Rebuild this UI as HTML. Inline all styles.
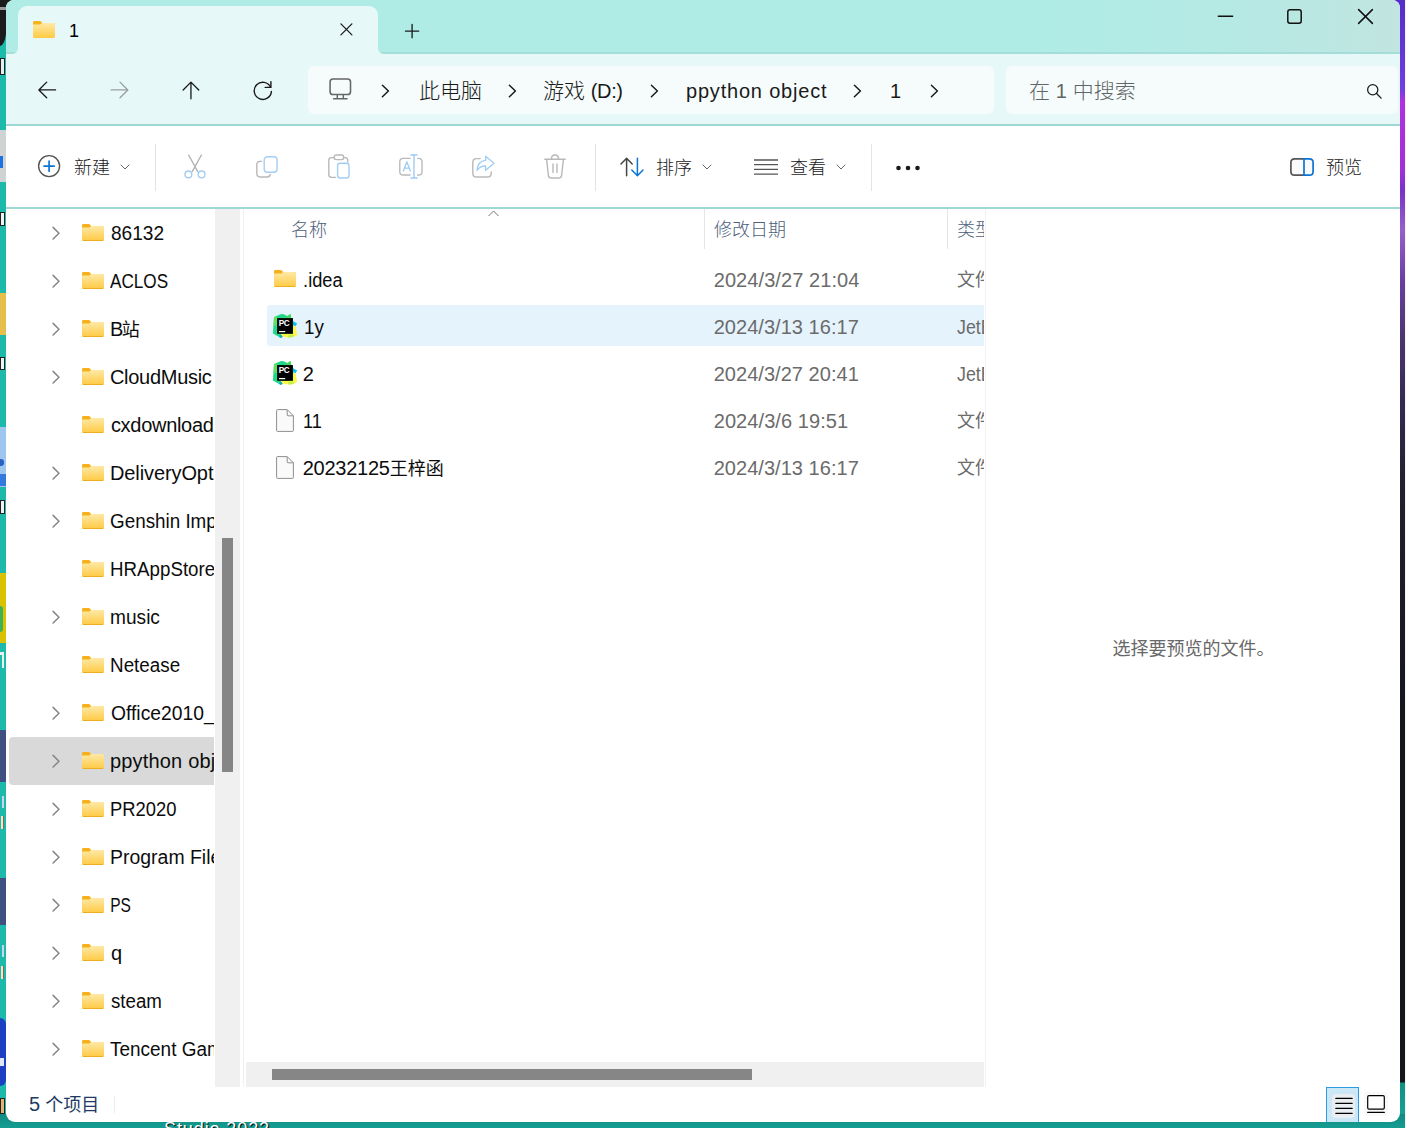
<!DOCTYPE html>
<html lang="zh-CN">
<head>
<meta charset="utf-8">
<title>1 - 文件资源管理器</title>
<style>
*{box-sizing:border-box;margin:0;padding:0}
html,body{width:1406px;height:1128px;overflow:hidden}
body{position:relative;background:#1dbaac;font-family:"Liberation Sans","Noto Sans CJK SC",sans-serif;font-size:18px;color:#1a1a1a;font-weight:300}
.abs{position:absolute}
svg{position:absolute;overflow:visible}
/* desktop behind */
#deskL{left:0;top:0;width:8px;height:1128px;background:#1dbaac}
#deskR{left:1388px;top:0;width:17px;height:1128px;background:linear-gradient(180deg,#552dc8 0,#6f3fe0 90px,#b032e0 102px,#a030d8 170px,#7a32c8 190px,#9660c8 230px,#6a3fa0 280px,#4a3570 340px,#352a55 400px,#24202f 480px,#14161e 700px,#14161e 1082px,#128f84 1083px,#17a89b 1128px)}
#deskRW{z-index:3;left:1405px;top:0;width:1px;height:1128px;background:#f4f4f4}
#deskB{left:0;top:1114px;width:1406px;height:14px;background:linear-gradient(180deg,#0f8a80,#159d92)}
/* window */
#win{z-index:2;left:6px;top:0;width:1394px;height:1122px;background:#fff;border-radius:8px 8px 9px 9px;overflow:hidden}
#titlebar{left:0;top:0;width:1394px;height:54px;background:linear-gradient(90deg,#b0ece6 0,#b0ece6 74%,#b5e9e4 88%,#c1e5e1 100%);border-bottom:2px solid #a5ddd8}
#tab{left:12px;top:6px;width:360px;height:48px;background:#e6f8f7;border-radius:9px 9px 0 0}
#tabL{left:6px;top:48px;width:6px;height:6px;background:radial-gradient(circle at 0 0,rgba(230,248,247,0) 5.5px,#e6f8f7 6.5px)}
#tabR{left:372px;top:48px;width:6px;height:6px;background:radial-gradient(circle at 100% 0,rgba(230,248,247,0) 5.5px,#e6f8f7 6.5px)}
#navbar{left:0;top:54px;width:1394px;height:71px;background:#e6f8f7}
#navline{left:0;top:124px;width:1394px;height:2px;background:#9fd7d4}
#toolbar{left:0;top:126px;width:1394px;height:81px;background:#fff}
#toolline{left:0;top:207px;width:1394px;height:2px;background:#9fd7d4}
.box{background:#f6fcfc;border-radius:6px}
.t21{font-size:21px;line-height:30px;white-space:nowrap}
.la{font-size:20px;font-weight:400}
.t18{font-size:18px;line-height:26px;white-space:nowrap}

.sl,.fn{font-size:20px;line-height:26px;white-space:nowrap;color:#0c0c0c;font-weight:400}
.cj{font-size:18px;font-weight:400}
.hd{font-size:18px;line-height:26px;white-space:nowrap;color:#4c607a;font-weight:300}
.fd{font-size:20px;line-height:26px;white-space:nowrap;color:#6b6b6b;font-weight:400}
.fd.cj{font-size:18px;font-weight:400}
.pv{font-size:18px;line-height:28px;color:#686868;font-weight:400;white-space:nowrap}
.st{font-size:18px;line-height:28px;color:#1e3964;font-weight:400;white-space:nowrap}
.st .la{font-size:20px;font-weight:400}
</style>
</head>
<body>
<div id="deskL" class="abs"></div>
<div id="deskR" class="abs"></div>
<div id="deskRW" class="abs"></div>
<div id="deskB" class="abs"></div>

<div id="win" class="abs">
  <div id="titlebar" class="abs"></div>
  <div id="tab" class="abs"></div>
  <div id="tabL" class="abs"></div>
  <div id="tabR" class="abs"></div>
  <div id="navbar" class="abs"></div>
  <div id="navline" class="abs"></div>
  <div id="toolbar" class="abs"></div>
  <div id="toolline" class="abs"></div>
  <!-- title bar contents (coordinates relative to #win: x-6) -->
  <svg id="tabfolder" style="left:26px;top:20px" width="24" height="19" viewBox="0 0 24 19">
    <defs><linearGradient id="fg" x1="0" y1="0" x2="0" y2="1"><stop offset="0" stop-color="#ffe9a6"/><stop offset="1" stop-color="#ffca43"/></linearGradient></defs>
    <path d="M1 2.2Q1 1 2.2 1H7.6Q8.4 1 9 1.6L10.6 3.2H21.6Q23 3.2 23 4.6V6H1Z" fill="#f7b31c"/>
    <path d="M1 4.6H8.2L10 3H21.8Q23 3 23 4.2V16.6Q23 18 21.6 18H2.4Q1 18 1 16.6Z" fill="url(#fg)"/>
  </svg>
  <div class="abs t18" style="left:63px;top:18px;color:#000">1</div>
  <svg style="left:333.700px;top:23.300px" width="12.800" height="12.800" viewBox="0 0 14 14"><path d="M1 1L13 13M13 1L1 13" stroke="#1a1a1a" stroke-width="1.4" fill="none" stroke-linecap="round"/></svg>
  <svg style="left:399.400px;top:24px" width="14.200" height="14.200" viewBox="0 0 15 15"><path d="M7.5 0.5V14.5M0.5 7.5H14.5" stroke="#1a1a1a" stroke-width="1.4" fill="none" stroke-linecap="round"/></svg>
  <svg style="left:1212px;top:15px" width="15" height="3" viewBox="0 0 15 3"><path d="M0.3 1.3H14.7" stroke="#111" stroke-width="1.4" stroke-linecap="round"/></svg>
  <svg style="left:1281px;top:9px" width="15" height="15" viewBox="0 0 15 15"><rect x="0.8" y="0.8" width="13.4" height="13.4" rx="2.2" fill="none" stroke="#111" stroke-width="1.5"/></svg>
  <svg style="left:1352px;top:9px" width="15" height="15" viewBox="0 0 15 15"><path d="M0.6 0.6L14.4 14.4M14.4 0.6L0.6 14.4" stroke="#111" stroke-width="1.5" fill="none" stroke-linecap="round"/></svg>
  <!-- nav bar (coords relative to #win: x-6) -->
  <svg style="left:31.600px;top:80.600px" width="18.900" height="17.900" viewBox="0 0 20 19"><path d="M18.6 9.5H1.2M9.2 1.2L0.9 9.5L9.2 17.8" stroke="#1a1a1a" stroke-width="1.4" fill="none" stroke-linecap="round" stroke-linejoin="round"/></svg>
  <svg style="left:103.600px;top:80.600px" width="18.900" height="17.900" viewBox="0 0 20 19"><path d="M1.2 9.5H18.6M10.6 1.2L18.9 9.5L10.6 17.8" stroke="#9b9f9f" stroke-width="1.4" fill="none" stroke-linecap="round" stroke-linejoin="round"/></svg>
  <svg style="left:175.500px;top:80.700px" width="17.900" height="18.900" viewBox="0 0 19 20"><path d="M9.5 18.8V1.4M1.2 9.6L9.5 1.2L17.8 9.6" stroke="#1a1a1a" stroke-width="1.4" fill="none" stroke-linecap="round" stroke-linejoin="round"/></svg>
  <svg style="left:246px;top:79px" width="22" height="22" viewBox="0 0 22 22"><path d="M18.6 8.2A8.6 8.6 0 1 0 19.4 12.4" stroke="#1a1a1a" stroke-width="1.4" fill="none" stroke-linecap="round"/><path d="M18.9 2.6V8.4H13.2" stroke="#1a1a1a" stroke-width="1.4" fill="none" stroke-linecap="round" stroke-linejoin="round"/></svg>
  <div class="abs box" style="left:302px;top:66px;width:686px;height:48px"></div>
  <svg style="left:323px;top:78.300px" width="22.600" height="22.400" viewBox="0 0 23 23"><rect x="1" y="1" width="21" height="16" rx="3" fill="none" stroke="#666" stroke-width="1.6"/><path d="M8.4 17.2V21M14.6 17.2V21M4.6 21.4H18.4" stroke="#666" stroke-width="1.5" fill="none" stroke-linecap="round"/></svg>
  <svg class="chev" style="left:375px;top:84px" width="9" height="14" viewBox="0 0 9 14"><path d="M1.4 1.2L7.4 7L1.4 12.8" stroke="#1a1a1a" stroke-width="1.5" fill="none" stroke-linecap="round" stroke-linejoin="round"/></svg>
  <div class="abs t21" style="left:413px;top:76px">此电脑</div>
  <svg class="chev" style="left:502px;top:84px" width="9" height="14" viewBox="0 0 9 14"><path d="M1.4 1.2L7.4 7L1.4 12.8" stroke="#1a1a1a" stroke-width="1.5" fill="none" stroke-linecap="round" stroke-linejoin="round"/></svg>
  <div class="abs t21" style="left:537px;top:76px">游戏 <span class="la" style="letter-spacing:-0.4px">(D:)</span></div>
  <svg class="chev" style="left:644px;top:84px" width="9" height="14" viewBox="0 0 9 14"><path d="M1.4 1.2L7.4 7L1.4 12.8" stroke="#1a1a1a" stroke-width="1.5" fill="none" stroke-linecap="round" stroke-linejoin="round"/></svg>
  <div class="abs t21" style="left:680px;top:76px"><span class="la" style="letter-spacing:0.8px">ppython object</span></div>
  <svg class="chev" style="left:847px;top:84px" width="9" height="14" viewBox="0 0 9 14"><path d="M1.4 1.2L7.4 7L1.4 12.8" stroke="#1a1a1a" stroke-width="1.5" fill="none" stroke-linecap="round" stroke-linejoin="round"/></svg>
  <div class="abs t21" style="left:884px;top:76px"><span class="la">1</span></div>
  <svg class="chev" style="left:924px;top:84px" width="9" height="14" viewBox="0 0 9 14"><path d="M1.4 1.2L7.4 7L1.4 12.8" stroke="#1a1a1a" stroke-width="1.5" fill="none" stroke-linecap="round" stroke-linejoin="round"/></svg>
  <div class="abs box" style="left:1000px;top:66px;width:392px;height:48px"></div>
  <div class="abs t21" style="left:1023px;top:76px;color:#5f6666">在 <span class="la">1</span> 中搜索</div>
  <svg style="left:1360px;top:83.400px" width="16.400" height="16.400" viewBox="0 0 18 18"><circle cx="7.4" cy="7.4" r="5.6" fill="none" stroke="#1a1a1a" stroke-width="1.4"/><path d="M11.6 11.6L16.6 16.6" stroke="#1a1a1a" stroke-width="1.5" stroke-linecap="round"/></svg>
  <!-- toolbar -->
  <svg style="left:31px;top:154px" width="24" height="24" viewBox="0 0 24 24"><circle cx="12.1" cy="12.1" r="10.5" fill="none" stroke="#555" stroke-width="1.4"/><path d="M12.1 7V17.2M7 12.1H17.2" stroke="#0a74d6" stroke-width="1.7" stroke-linecap="round"/></svg>
  <div class="abs t18" style="left:68px;top:155px">新建</div>
  <svg style="left:114px;top:164px" width="10" height="6" viewBox="0 0 10 6"><path d="M1 1L5 5L9 1" stroke="#666" stroke-width="1" fill="none" stroke-linecap="round" stroke-linejoin="round"/></svg>
  <div class="abs sep" style="left:149px;top:144px;width:1px;height:47px;background:#e4e4e4"></div>
  <svg style="left:178px;top:154px" width="22" height="25" viewBox="0 0 22 25"><path d="M4.6 1L13.6 17.4M17.4 1L8.4 17.4" stroke="#b4b4b4" stroke-width="1.4" fill="none" stroke-linecap="round"/><circle cx="4.4" cy="20.4" r="3.4" fill="none" stroke="#a3cdf3" stroke-width="1.4"/><circle cx="17.6" cy="20.4" r="3.4" fill="none" stroke="#a3cdf3" stroke-width="1.4"/></svg>
  <svg style="left:250px;top:156px" width="22" height="22" viewBox="0 0 22 22"><path d="M5.6 5.4H4.2Q0.8 5.4 0.8 8.8V17.6Q0.8 21 4.2 21H10.8Q14 21 14.2 18.4" stroke="#b9b9b9" stroke-width="1.4" fill="none" stroke-linecap="round"/><rect x="8.2" y="0.8" width="12.8" height="15.4" rx="3.2" fill="none" stroke="#a3cdf3" stroke-width="1.4"/></svg>
  <svg style="left:322px;top:154px" width="22" height="25" viewBox="0 0 22 25"><path d="M6 3.6H3.6Q0.8 3.6 0.8 6.4V20.6Q0.8 23.4 3.6 23.4H7.6M16 3.6H17.2Q19.6 3.6 19.8 6.2V8" stroke="#b9b9b9" stroke-width="1.4" fill="none" stroke-linecap="round"/><rect x="6.2" y="1" width="9.4" height="4.6" rx="1.8" fill="none" stroke="#b9b9b9" stroke-width="1.4"/><rect x="9.6" y="9.2" width="11.4" height="14.8" rx="2.4" fill="none" stroke="#a3cdf3" stroke-width="1.4"/></svg>
  <svg style="left:393px;top:154px" width="24" height="25" viewBox="0 0 25 25" preserveAspectRatio="none"><path d="M11.6 4.4H4.4Q0.8 4.4 0.8 8V17.4Q0.8 21 4.4 21H11.6M19.4 4.4H20.4Q24 4.4 24 8V17.4Q24 21 20.4 21H19.4" stroke="#b9b9b9" stroke-width="1.4" fill="none" stroke-linecap="round"/><path d="M15.6 1.4V23.6M12.4 1H18.8M12.4 24H18.8" stroke="#9ccaf3" stroke-width="1.4" fill="none" stroke-linecap="round"/><path d="M4.6 17L8.2 7.8L11.8 17M5.8 14.2H10.6" stroke="#9ccaf3" stroke-width="1.3" fill="none" stroke-linecap="round" stroke-linejoin="round"/></svg>
  <svg style="left:466px;top:155px" width="23" height="23" viewBox="0 0 23 23"><path d="M8.2 3.6H4.6Q0.8 3.6 0.8 7.4V18.2Q0.8 22 4.6 22H15.4Q19.2 22 19.2 18.2V17" stroke="#b9b9b9" stroke-width="1.4" fill="none" stroke-linecap="round"/><path d="M13.6 1.2L22 8.2L13.6 15.2V11Q8 10.8 5 15.4Q5.600 6.2 13.6 5.400Z" stroke="#a3cdf3" stroke-width="1.4" fill="none" stroke-linejoin="round"/></svg>
  <svg style="left:538px;top:154px" width="22" height="25" viewBox="0 0 22 25"><path d="M0.8 5.2H21.2M7.400 4.800Q7.600 1 11 1Q14.400 1 14.600 4.800" stroke="#b9b9b9" stroke-width="1.400" fill="none" stroke-linecap="round"/><path d="M2.600 5.400L4.400 21.400Q4.700 24 7.200 24H14.800Q17.300 24 17.600 21.400L19.400 5.400" stroke="#b9b9b9" stroke-width="1.400" fill="none" stroke-linecap="round"/><path d="M9 10V18.600M13 10V18.600" stroke="#b9b9b9" stroke-width="1.400" stroke-linecap="round"/></svg>
  <div class="abs sep" style="left:589px;top:144px;width:1px;height:47px;background:#e4e4e4"></div>
  <svg style="left:614px;top:157px" width="24" height="20" viewBox="0 0 24 20"><path d="M6.600 18.800V1.400M1 7L6.600 1.200L12.200 7" stroke="#444" stroke-width="1.500" fill="none" stroke-linecap="round" stroke-linejoin="round"/><path d="M17.400 1.200V18.600M11.800 13L17.400 18.800L23 13" stroke="#0a74d6" stroke-width="1.500" fill="none" stroke-linecap="round" stroke-linejoin="round"/></svg>
  <div class="abs t18" style="left:650px;top:155px">排序</div>
  <svg style="left:696px;top:164px" width="10" height="6" viewBox="0 0 10 6"><path d="M1 1L5 5L9 1" stroke="#666" stroke-width="1" fill="none" stroke-linecap="round" stroke-linejoin="round"/></svg>
  <svg style="left:748px;top:159px" width="24" height="17" viewBox="0 0 24 17"><path d="M0 1H24M0 5.700H24M0 10.400H24M0 15.200H24" stroke="#555" stroke-width="1.300" fill="none"/></svg>
  <div class="abs t18" style="left:784px;top:155px">查看</div>
  <svg style="left:830px;top:164px" width="10" height="6" viewBox="0 0 10 6"><path d="M1 1L5 5L9 1" stroke="#666" stroke-width="1" fill="none" stroke-linecap="round" stroke-linejoin="round"/></svg>
  <div class="abs sep" style="left:865px;top:144px;width:1px;height:47px;background:#e4e4e4"></div>
  <svg style="left:889px;top:165px" width="26" height="6" viewBox="0 0 26 6"><circle cx="3.500" cy="3" r="2.300" fill="#1a1a1a"/><circle cx="13" cy="3" r="2.300" fill="#1a1a1a"/><circle cx="22.500" cy="3" r="2.300" fill="#1a1a1a"/></svg>
  <svg style="left:1284px;top:158px" width="24" height="18" viewBox="0 0 24 18"><path d="M14 0.900H4.600Q0.900 0.900 0.900 4.600V13.400Q0.900 17.100 4.600 17.100H14" stroke="#555" stroke-width="1.700" fill="#fafafa"/><path d="M14 0.900H19.400Q23.100 0.900 23.100 4.600V13.400Q23.100 17.100 19.400 17.100H14Z" stroke="#0a74d6" stroke-width="1.700" fill="#fafafa"/></svg>
  <div class="abs t18" style="left:1320px;top:155px">预览</div>
  <!-- sidebar -->
  <div id="side" class="abs" style="left:0;top:209px;width:208px;height:878px;overflow:hidden">
    <svg style="left:46px;top:17px" width="9" height="14" viewBox="0 0 9 14"><path d="M1.100 1.400L7 7.200L1.100 13" stroke="#868686" stroke-width="1.500" fill="none" stroke-linecap="round" stroke-linejoin="round"/></svg>
    <svg style="left:76px;top:15px" width="22" height="17" viewBox="0 0 22 17"><path d="M0 1.4Q0 0 1.4 0H6.400Q7.200 0 7.800 0.600L9.200 2H20.600Q22 2 22 3.400V5H0Z" fill="#f5b01a"/><path d="M0 3.400H7.400L9 2H20.600Q22 2 22 3.400V15.600Q22 17 20.600 17H1.400Q0 17 0 15.600Z" fill="url(#fg)"/><path d="M0.300 16.300Q0.700 17 1.400 17H20.600Q21.300 17 21.700 16.300Z" fill="#eaa416"/></svg>
    <div class="abs sl" style="left:104.9px;top:11px;transform:scaleX(0.955);transform-origin:0.0px 50%">86132</div>
    <svg style="left:46px;top:65px" width="9" height="14" viewBox="0 0 9 14"><path d="M1.100 1.400L7 7.200L1.100 13" stroke="#868686" stroke-width="1.500" fill="none" stroke-linecap="round" stroke-linejoin="round"/></svg>
    <svg style="left:76px;top:63px" width="22" height="17" viewBox="0 0 22 17"><path d="M0 1.4Q0 0 1.4 0H6.400Q7.200 0 7.800 0.600L9.200 2H20.600Q22 2 22 3.400V5H0Z" fill="#f5b01a"/><path d="M0 3.400H7.400L9 2H20.600Q22 2 22 3.400V15.600Q22 17 20.600 17H1.400Q0 17 0 15.600Z" fill="url(#fg)"/><path d="M0.300 16.300Q0.700 17 1.400 17H20.600Q21.300 17 21.700 16.300Z" fill="#eaa416"/></svg>
    <div class="abs sl" style="left:104.4px;top:59px;transform:scaleX(0.857);transform-origin:0.0px 50%">ACLOS</div>
    <svg style="left:46px;top:113px" width="9" height="14" viewBox="0 0 9 14"><path d="M1.100 1.400L7 7.200L1.100 13" stroke="#868686" stroke-width="1.500" fill="none" stroke-linecap="round" stroke-linejoin="round"/></svg>
    <svg style="left:76px;top:111px" width="22" height="17" viewBox="0 0 22 17"><path d="M0 1.4Q0 0 1.4 0H6.400Q7.200 0 7.800 0.600L9.200 2H20.600Q22 2 22 3.400V5H0Z" fill="#f5b01a"/><path d="M0 3.400H7.400L9 2H20.600Q22 2 22 3.400V15.600Q22 17 20.600 17H1.400Q0 17 0 15.600Z" fill="url(#fg)"/><path d="M0.300 16.300Q0.700 17 1.400 17H20.600Q21.300 17 21.700 16.300Z" fill="#eaa416"/></svg>
    <div class="abs sl" style="left:103.9px;top:107px;letter-spacing:-1.6px">B<span class="cj" style="letter-spacing:0">站</span></div>
    <svg style="left:46px;top:161px" width="9" height="14" viewBox="0 0 9 14"><path d="M1.100 1.400L7 7.200L1.100 13" stroke="#868686" stroke-width="1.500" fill="none" stroke-linecap="round" stroke-linejoin="round"/></svg>
    <svg style="left:76px;top:159px" width="22" height="17" viewBox="0 0 22 17"><path d="M0 1.4Q0 0 1.4 0H6.400Q7.200 0 7.800 0.600L9.200 2H20.600Q22 2 22 3.400V5H0Z" fill="#f5b01a"/><path d="M0 3.400H7.400L9 2H20.600Q22 2 22 3.400V15.600Q22 17 20.600 17H1.400Q0 17 0 15.600Z" fill="url(#fg)"/><path d="M0.300 16.300Q0.700 17 1.400 17H20.600Q21.300 17 21.700 16.300Z" fill="#eaa416"/></svg>
    <div class="abs sl" style="left:103.9px;top:155px;letter-spacing:-0.28px">CloudMusic</div>
    <svg style="left:76px;top:207px" width="22" height="17" viewBox="0 0 22 17"><path d="M0 1.4Q0 0 1.4 0H6.400Q7.200 0 7.800 0.600L9.200 2H20.600Q22 2 22 3.400V5H0Z" fill="#f5b01a"/><path d="M0 3.400H7.400L9 2H20.600Q22 2 22 3.400V15.600Q22 17 20.600 17H1.400Q0 17 0 15.600Z" fill="url(#fg)"/><path d="M0.300 16.300Q0.700 17 1.400 17H20.600Q21.300 17 21.700 16.300Z" fill="#eaa416"/></svg>
    <div class="abs sl" style="left:104.9px;top:203px;letter-spacing:-0.29px">cxdownload</div>
    <svg style="left:46px;top:257px" width="9" height="14" viewBox="0 0 9 14"><path d="M1.100 1.400L7 7.200L1.100 13" stroke="#868686" stroke-width="1.500" fill="none" stroke-linecap="round" stroke-linejoin="round"/></svg>
    <svg style="left:76px;top:255px" width="22" height="17" viewBox="0 0 22 17"><path d="M0 1.4Q0 0 1.4 0H6.400Q7.200 0 7.800 0.600L9.200 2H20.600Q22 2 22 3.400V5H0Z" fill="#f5b01a"/><path d="M0 3.400H7.400L9 2H20.600Q22 2 22 3.400V15.600Q22 17 20.600 17H1.400Q0 17 0 15.600Z" fill="url(#fg)"/><path d="M0.300 16.300Q0.700 17 1.400 17H20.600Q21.300 17 21.700 16.300Z" fill="#eaa416"/></svg>
    <div class="abs sl" style="left:103.9px;top:251px;letter-spacing:-0.09px">DeliveryOptimization</div>
    <svg style="left:46px;top:305px" width="9" height="14" viewBox="0 0 9 14"><path d="M1.100 1.400L7 7.200L1.100 13" stroke="#868686" stroke-width="1.500" fill="none" stroke-linecap="round" stroke-linejoin="round"/></svg>
    <svg style="left:76px;top:303px" width="22" height="17" viewBox="0 0 22 17"><path d="M0 1.4Q0 0 1.4 0H6.400Q7.200 0 7.800 0.600L9.200 2H20.600Q22 2 22 3.400V5H0Z" fill="#f5b01a"/><path d="M0 3.400H7.400L9 2H20.600Q22 2 22 3.400V15.600Q22 17 20.600 17H1.400Q0 17 0 15.600Z" fill="url(#fg)"/><path d="M0.300 16.300Q0.700 17 1.400 17H20.600Q21.300 17 21.700 16.300Z" fill="#eaa416"/></svg>
    <div class="abs sl" style="left:103.9px;top:299px;transform:scaleX(0.941);transform-origin:1.0px 50%">Genshin Impact Game</div>
    <svg style="left:76px;top:351px" width="22" height="17" viewBox="0 0 22 17"><path d="M0 1.4Q0 0 1.4 0H6.400Q7.200 0 7.800 0.600L9.200 2H20.600Q22 2 22 3.400V5H0Z" fill="#f5b01a"/><path d="M0 3.400H7.400L9 2H20.600Q22 2 22 3.400V15.600Q22 17 20.600 17H1.400Q0 17 0 15.600Z" fill="url(#fg)"/><path d="M0.300 16.300Q0.700 17 1.400 17H20.600Q21.300 17 21.700 16.300Z" fill="#eaa416"/></svg>
    <div class="abs sl" style="left:103.9px;top:347px;transform:scaleX(0.936);transform-origin:1.0px 50%">HRAppStore</div>
    <svg style="left:46px;top:401px" width="9" height="14" viewBox="0 0 9 14"><path d="M1.100 1.400L7 7.200L1.100 13" stroke="#868686" stroke-width="1.500" fill="none" stroke-linecap="round" stroke-linejoin="round"/></svg>
    <svg style="left:76px;top:399px" width="22" height="17" viewBox="0 0 22 17"><path d="M0 1.4Q0 0 1.4 0H6.400Q7.200 0 7.800 0.600L9.200 2H20.600Q22 2 22 3.400V5H0Z" fill="#f5b01a"/><path d="M0 3.400H7.400L9 2H20.600Q22 2 22 3.400V15.600Q22 17 20.600 17H1.400Q0 17 0 15.600Z" fill="url(#fg)"/><path d="M0.300 16.300Q0.700 17 1.400 17H20.600Q21.300 17 21.700 16.300Z" fill="#eaa416"/></svg>
    <div class="abs sl" style="left:103.9px;top:395px;transform:scaleX(0.955);transform-origin:1.0px 50%">music</div>
    <svg style="left:76px;top:447px" width="22" height="17" viewBox="0 0 22 17"><path d="M0 1.4Q0 0 1.4 0H6.400Q7.200 0 7.800 0.600L9.200 2H20.600Q22 2 22 3.400V5H0Z" fill="#f5b01a"/><path d="M0 3.400H7.400L9 2H20.600Q22 2 22 3.400V15.600Q22 17 20.600 17H1.400Q0 17 0 15.600Z" fill="url(#fg)"/><path d="M0.300 16.300Q0.700 17 1.400 17H20.600Q21.300 17 21.700 16.300Z" fill="#eaa416"/></svg>
    <div class="abs sl" style="left:103.9px;top:443px;transform:scaleX(0.940);transform-origin:1.0px 50%">Netease</div>
    <svg style="left:46px;top:497px" width="9" height="14" viewBox="0 0 9 14"><path d="M1.100 1.400L7 7.200L1.100 13" stroke="#868686" stroke-width="1.500" fill="none" stroke-linecap="round" stroke-linejoin="round"/></svg>
    <svg style="left:76px;top:495px" width="22" height="17" viewBox="0 0 22 17"><path d="M0 1.4Q0 0 1.4 0H6.400Q7.200 0 7.800 0.600L9.200 2H20.600Q22 2 22 3.400V5H0Z" fill="#f5b01a"/><path d="M0 3.400H7.400L9 2H20.600Q22 2 22 3.400V15.600Q22 17 20.600 17H1.400Q0 17 0 15.600Z" fill="url(#fg)"/><path d="M0.300 16.300Q0.700 17 1.400 17H20.600Q21.300 17 21.700 16.300Z" fill="#eaa416"/></svg>
    <div class="abs sl" style="left:104.9px;top:491px;transform:scaleX(0.964);transform-origin:0.0px 50%">Office2010_SP1</div>
    <div class="abs" style="left:3px;top:528px;width:210px;height:48px;background:#d9d9d9;border-radius:4px 0 0 4px"></div>
    <svg style="left:46px;top:545px" width="9" height="14" viewBox="0 0 9 14"><path d="M1.100 1.400L7 7.200L1.100 13" stroke="#868686" stroke-width="1.500" fill="none" stroke-linecap="round" stroke-linejoin="round"/></svg>
    <svg style="left:76px;top:543px" width="22" height="17" viewBox="0 0 22 17"><path d="M0 1.4Q0 0 1.4 0H6.400Q7.200 0 7.800 0.600L9.200 2H20.600Q22 2 22 3.400V5H0Z" fill="#f5b01a"/><path d="M0 3.400H7.400L9 2H20.600Q22 2 22 3.400V15.600Q22 17 20.600 17H1.400Q0 17 0 15.600Z" fill="url(#fg)"/><path d="M0.300 16.300Q0.700 17 1.400 17H20.600Q21.300 17 21.700 16.300Z" fill="#eaa416"/></svg>
    <div class="abs sl" style="left:103.9px;top:539px;letter-spacing:0.19px">ppython object</div>
    <svg style="left:46px;top:593px" width="9" height="14" viewBox="0 0 9 14"><path d="M1.100 1.400L7 7.200L1.100 13" stroke="#868686" stroke-width="1.500" fill="none" stroke-linecap="round" stroke-linejoin="round"/></svg>
    <svg style="left:76px;top:591px" width="22" height="17" viewBox="0 0 22 17"><path d="M0 1.4Q0 0 1.4 0H6.400Q7.200 0 7.800 0.600L9.200 2H20.600Q22 2 22 3.400V5H0Z" fill="#f5b01a"/><path d="M0 3.400H7.400L9 2H20.600Q22 2 22 3.400V15.600Q22 17 20.600 17H1.400Q0 17 0 15.600Z" fill="url(#fg)"/><path d="M0.300 16.300Q0.700 17 1.400 17H20.600Q21.300 17 21.700 16.300Z" fill="#eaa416"/></svg>
    <div class="abs sl" style="left:103.9px;top:587px;transform:scaleX(0.919);transform-origin:1.0px 50%">PR2020</div>
    <svg style="left:46px;top:641px" width="9" height="14" viewBox="0 0 9 14"><path d="M1.100 1.400L7 7.200L1.100 13" stroke="#868686" stroke-width="1.500" fill="none" stroke-linecap="round" stroke-linejoin="round"/></svg>
    <svg style="left:76px;top:639px" width="22" height="17" viewBox="0 0 22 17"><path d="M0 1.4Q0 0 1.4 0H6.400Q7.200 0 7.800 0.600L9.200 2H20.600Q22 2 22 3.400V5H0Z" fill="#f5b01a"/><path d="M0 3.400H7.400L9 2H20.600Q22 2 22 3.400V15.600Q22 17 20.600 17H1.400Q0 17 0 15.600Z" fill="url(#fg)"/><path d="M0.300 16.300Q0.700 17 1.400 17H20.600Q21.300 17 21.700 16.300Z" fill="#eaa416"/></svg>
    <div class="abs sl" style="left:103.9px;top:635px;transform:scaleX(0.972);transform-origin:1.0px 50%">Program Files</div>
    <svg style="left:46px;top:689px" width="9" height="14" viewBox="0 0 9 14"><path d="M1.100 1.400L7 7.200L1.100 13" stroke="#868686" stroke-width="1.500" fill="none" stroke-linecap="round" stroke-linejoin="round"/></svg>
    <svg style="left:76px;top:687px" width="22" height="17" viewBox="0 0 22 17"><path d="M0 1.4Q0 0 1.4 0H6.400Q7.200 0 7.800 0.600L9.200 2H20.600Q22 2 22 3.400V5H0Z" fill="#f5b01a"/><path d="M0 3.400H7.400L9 2H20.600Q22 2 22 3.400V15.600Q22 17 20.600 17H1.400Q0 17 0 15.600Z" fill="url(#fg)"/><path d="M0.300 16.300Q0.700 17 1.400 17H20.600Q21.300 17 21.700 16.300Z" fill="#eaa416"/></svg>
    <div class="abs sl" style="left:103.9px;top:683px;transform:scaleX(0.773);transform-origin:1.0px 50%">PS</div>
    <svg style="left:46px;top:737px" width="9" height="14" viewBox="0 0 9 14"><path d="M1.100 1.400L7 7.200L1.100 13" stroke="#868686" stroke-width="1.500" fill="none" stroke-linecap="round" stroke-linejoin="round"/></svg>
    <svg style="left:76px;top:735px" width="22" height="17" viewBox="0 0 22 17"><path d="M0 1.4Q0 0 1.4 0H6.400Q7.200 0 7.800 0.600L9.200 2H20.600Q22 2 22 3.400V5H0Z" fill="#f5b01a"/><path d="M0 3.400H7.400L9 2H20.600Q22 2 22 3.400V15.600Q22 17 20.600 17H1.400Q0 17 0 15.600Z" fill="url(#fg)"/><path d="M0.300 16.300Q0.700 17 1.400 17H20.600Q21.300 17 21.700 16.300Z" fill="#eaa416"/></svg>
    <div class="abs sl" style="left:104.9px;top:731px">q</div>
    <svg style="left:46px;top:785px" width="9" height="14" viewBox="0 0 9 14"><path d="M1.100 1.400L7 7.200L1.100 13" stroke="#868686" stroke-width="1.500" fill="none" stroke-linecap="round" stroke-linejoin="round"/></svg>
    <svg style="left:76px;top:783px" width="22" height="17" viewBox="0 0 22 17"><path d="M0 1.4Q0 0 1.4 0H6.400Q7.200 0 7.800 0.600L9.200 2H20.600Q22 2 22 3.400V5H0Z" fill="#f5b01a"/><path d="M0 3.400H7.400L9 2H20.600Q22 2 22 3.400V15.600Q22 17 20.600 17H1.400Q0 17 0 15.600Z" fill="url(#fg)"/><path d="M0.300 16.300Q0.700 17 1.400 17H20.600Q21.300 17 21.700 16.300Z" fill="#eaa416"/></svg>
    <div class="abs sl" style="left:104.9px;top:779px;transform:scaleX(0.935);transform-origin:0.0px 50%">steam</div>
    <svg style="left:46px;top:833px" width="9" height="14" viewBox="0 0 9 14"><path d="M1.100 1.400L7 7.200L1.100 13" stroke="#868686" stroke-width="1.500" fill="none" stroke-linecap="round" stroke-linejoin="round"/></svg>
    <svg style="left:76px;top:831px" width="22" height="17" viewBox="0 0 22 17"><path d="M0 1.4Q0 0 1.4 0H6.400Q7.200 0 7.800 0.600L9.200 2H20.600Q22 2 22 3.400V5H0Z" fill="#f5b01a"/><path d="M0 3.400H7.400L9 2H20.600Q22 2 22 3.400V15.600Q22 17 20.600 17H1.400Q0 17 0 15.600Z" fill="url(#fg)"/><path d="M0.300 16.300Q0.700 17 1.400 17H20.600Q21.300 17 21.700 16.300Z" fill="#eaa416"/></svg>
    <div class="abs sl" style="left:104.4px;top:827px;transform:scaleX(0.948);transform-origin:0.0px 50%">Tencent Games</div>
  </div>
  <div class="abs" style="left:209px;top:209px;width:25px;height:878px;background:#f0f0f0"></div>
  <div class="abs" style="left:216px;top:538px;width:11px;height:234px;background:#868686"></div>
  <div class="abs" style="left:237px;top:209px;width:1px;height:878px;background:#f0f0f0"></div>
  <!-- file list -->
  <div id="files" class="abs" style="left:239px;top:209px;width:739px;height:853px;overflow:hidden">
    <div class="abs hd" style="left:46px;top:8px">名称</div>
    <svg style="left:243px;top:1px" width="11" height="7" viewBox="0 0 11 7"><path d="M0.500 6L5.500 1L10.500 6" stroke="#767676" stroke-width="1" fill="none"/></svg>
    <div class="abs" style="left:459px;top:0;width:1px;height:40px;background:#e5e5e5"></div>
    <div class="abs hd" style="left:469px;top:8px">修改日期</div>
    <div class="abs" style="left:702px;top:0;width:1px;height:40px;background:#e5e5e5"></div>
    <div class="abs hd" style="left:712px;top:8px">类型</div>
    <svg style="left:29px;top:61px" width="22" height="17" viewBox="0 0 22 17"><path d="M0 1.4Q0 0 1.4 0H6.400Q7.200 0 7.800 0.600L9.200 2H20.600Q22 2 22 3.400V5H0Z" fill="#f5b01a"/><path d="M0 3.400H7.400L9 2H20.600Q22 2 22 3.400V15.600Q22 17 20.600 17H1.400Q0 17 0 15.600Z" fill="url(#fg)"/><path d="M0.300 16.300Q0.700 17 1.400 17H20.600Q21.300 17 21.700 16.300Z" fill="#eaa416"/></svg>
    <div class="abs fn" style="left:57.7px;top:57.5px;transform:scaleX(0.913);transform-origin:1.0px 50%">.idea</div>
    <div class="abs fd" style="left:468.7px;top:57.5px;letter-spacing:0.08px">2024/3/27 21:04</div>
    <div class="abs fd cj" style="left:712.0px;top:57.5px">文件夹</div>
    <div class="abs" style="left:22px;top:96px;width:760px;height:41px;background:#e5f3fd;border-radius:3px 0 0 3px"></div>
    <svg style="left:27px;top:104px" width="26" height="26" viewBox="0 0 26 26"><polygon points="2,4 9.200,1.100 11.700,1.300 15.300,2.900 18.600,1 19.200,5.100 21,5.100 21,21 8.200,21 10.700,23.500 8.900,24.900 0.900,20.500" fill="#21d789"/><polygon points="2,4.200 5.200,3.600 5.200,13 1.500,12.500" fill="#7ddf55" opacity=".75"/><polygon points="15.300,2.900 18.600,1 19.200,5.100 12,5.100" fill="#4fd94f" opacity=".8"/><polygon points="20.900,7.900 25.200,10.400 23.400,13.200 20.900,12.600" fill="#07c3f2"/><polygon points="8.200,21 20.900,20.700 20.900,12.600 23.400,13 25.200,21.400 24.100,23.100 18.800,24.600 13.900,24.200 10.700,23.500" fill="#fcf84a"/><polygon points="16.500,22 21,21.500 22,23.600 18.800,24.600 16,24.400" fill="#a9ea4a" opacity=".7"/><polygon points="8.200,21 10.700,23.500 8.900,24.900 7.300,24" fill="#14a6c8"/><rect x="5.100" y="5.100" width="15.800" height="15.700" fill="#000"/><text x="6.700" y="13.100" font-family="Liberation Sans,sans-serif" font-weight="700" font-size="8.200" fill="#fff" letter-spacing="-0.300">PC</text><rect x="7" y="18" width="6.200" height="1.200" fill="#fff"/></svg>
    <div class="abs fn" style="left:58.7px;top:104.5px;transform:scaleX(0.939);transform-origin:1.0px 50%">1y</div>
    <div class="abs fd" style="left:468.7px;top:104.5px;letter-spacing:0.04px">2024/3/13 16:17</div>
    <div class="abs fd" style="left:711.5px;top:104.5px;transform:scaleX(0.89);transform-origin:0 50%">JetBrains PyCharm</div>
    <svg style="left:27px;top:151px" width="26" height="26" viewBox="0 0 26 26"><polygon points="2,4 9.200,1.100 11.700,1.300 15.300,2.900 18.600,1 19.200,5.100 21,5.100 21,21 8.200,21 10.700,23.500 8.900,24.900 0.900,20.500" fill="#21d789"/><polygon points="2,4.200 5.200,3.600 5.200,13 1.500,12.500" fill="#7ddf55" opacity=".75"/><polygon points="15.300,2.900 18.600,1 19.200,5.100 12,5.100" fill="#4fd94f" opacity=".8"/><polygon points="20.900,7.900 25.200,10.400 23.400,13.200 20.900,12.600" fill="#07c3f2"/><polygon points="8.200,21 20.900,20.700 20.900,12.600 23.400,13 25.200,21.400 24.100,23.100 18.800,24.600 13.900,24.200 10.700,23.500" fill="#fcf84a"/><polygon points="16.500,22 21,21.500 22,23.600 18.800,24.600 16,24.400" fill="#a9ea4a" opacity=".7"/><polygon points="8.200,21 10.700,23.500 8.900,24.900 7.300,24" fill="#14a6c8"/><rect x="5.100" y="5.100" width="15.800" height="15.700" fill="#000"/><text x="6.700" y="13.100" font-family="Liberation Sans,sans-serif" font-weight="700" font-size="8.200" fill="#fff" letter-spacing="-0.300">PC</text><rect x="7" y="18" width="6.200" height="1.200" fill="#fff"/></svg>
    <div class="abs fn" style="left:57.7px;top:151.5px;">2</div>
    <div class="abs fd" style="left:468.7px;top:151.5px;letter-spacing:0.04px">2024/3/27 20:41</div>
    <div class="abs fd" style="left:711.5px;top:151.5px;transform:scaleX(0.89);transform-origin:0 50%">JetBrains PyCharm</div>
    <svg style="left:30.5px;top:200px" width="18" height="23" viewBox="0 0 18 23"><path d="M1.400 0.600H11.200L17.400 6.800V21.600Q17.400 22.400 16.600 22.400H1.400Q0.600 22.400 0.600 21.600V1.400Q0.600 0.600 1.400 0.600Z" fill="#fafafa" stroke="#8e8e8e" stroke-width="1"/><path d="M11.200 0.800V6Q11.200 6.800 12 6.800H17.200" fill="none" stroke="#8e8e8e" stroke-width="1"/></svg>
    <div class="abs fn" style="left:58.1px;top:198.5px;transform:scaleX(0.911);transform-origin:1.0px 50%">11</div>
    <div class="abs fd" style="left:468.7px;top:198.5px;letter-spacing:0.08px">2024/3/6 19:51</div>
    <div class="abs fd cj" style="left:712.0px;top:198.5px">文件</div>
    <svg style="left:30.5px;top:247px" width="18" height="23" viewBox="0 0 18 23"><path d="M1.400 0.600H11.200L17.400 6.800V21.600Q17.400 22.400 16.600 22.400H1.400Q0.600 22.400 0.600 21.600V1.400Q0.600 0.600 1.400 0.600Z" fill="#fafafa" stroke="#8e8e8e" stroke-width="1"/><path d="M11.200 0.800V6Q11.200 6.800 12 6.800H17.200" fill="none" stroke="#8e8e8e" stroke-width="1"/></svg>
    <div class="abs fn" style="left:57.7px;top:245.5px;letter-spacing:-0.25px">20232125<span class="cj" style="letter-spacing:0">王梓函</span></div>
    <div class="abs fd" style="left:468.7px;top:245.5px;letter-spacing:0.04px">2024/3/13 16:17</div>
    <div class="abs fd cj" style="left:712.0px;top:245.5px">文件</div>
  </div>
  <div class="abs" style="left:240px;top:1062px;width:738px;height:25px;background:#f0f0f0"></div>
  <div class="abs" style="left:266px;top:1069px;width:480px;height:11px;background:#868686"></div>
  <div class="abs" style="left:979px;top:209px;width:1px;height:878px;background:#f1f1f1"></div>
  <!-- preview pane -->
  <div class="abs pv" style="left:981px;top:635px;width:413px;text-align:center">选择要预览的文件。</div>
  <!-- status bar -->
  <div class="abs st" style="left:23px;top:1090px"><span class="la">5</span> 个项目</div>
  <div class="abs" style="left:108px;top:1096px;width:1px;height:17px;background:#ececec"></div>
  <div class="abs" style="left:1320px;top:1087px;width:33px;height:36px;background:#cce8f7;border:1.500px solid #2b9be3;border-bottom:none"></div>
  <div class="abs" style="left:1326px;top:1094px;width:23px;height:24px;background:#e9eef2;border-radius:4px"></div>
  <svg style="left:1328px;top:1097px" width="20" height="18" viewBox="0 0 20 18"><path d="M1.800 1.400H18.200M1.800 6.400H18.200M1.800 11.400H18.200M1.800 16.400H18.200" stroke="#000" stroke-width="1.100" stroke-linecap="round"/></svg>
  <div class="abs" style="left:1358px;top:1092px;width:24px;height:24px;background:#f9f9f9;border-radius:4px"></div>
  <svg style="left:1361px;top:1095px" width="18" height="18" viewBox="0 0 18 18"><rect x="0.700" y="0.700" width="16.600" height="13.400" rx="1.300" fill="#fff" stroke="#000" stroke-width="1.200"/><path d="M0.600 17.300H17.400" stroke="#000" stroke-width="1.300" stroke-linecap="round"/></svg>
</div>
<!-- desktop fragments visible around the window -->
<div class="abs" style="left:0;top:0;width:14px;height:24px;background:#1b1b1b"></div>
<div class="abs" style="left:0;top:24px;width:7px;height:22px;background:#1b1b1b;border-radius:0 0 7px 0/0 0 22px 0"></div>
<div class="abs" style="left:0;top:7px;width:6px;height:3px;background:#9a9a9a"></div>
<div class="abs" style="left:0;top:58px;width:5px;height:17px;background:#e9efee;border:1px solid #222"></div>
<div class="abs" style="left:0;top:130px;width:6px;height:52px;background:#cfd3d4"></div>
<div class="abs" style="left:0;top:156px;width:3px;height:12px;background:#1a73e0"></div>
<div class="abs" style="left:0;top:212px;width:5px;height:14px;background:#f2f2f2;border:1px solid #222"></div>
<div class="abs" style="left:0;top:293px;width:6px;height:42px;background:#e6be4c"></div>
<div class="abs" style="left:0;top:357px;width:5px;height:13px;background:#f2f2f2;border:1px solid #222"></div>
<div class="abs" style="left:0;top:427px;width:6px;height:60px;background:#9fc6ee"></div>
<div class="abs" style="left:0;top:459px;width:4px;height:7px;background:#2a62c4;border-radius:0 3px 3px 0"></div>
<div class="abs" style="left:0;top:474px;width:6px;height:12px;background:#3579dc"></div>
<div class="abs" style="left:0;top:500px;width:5px;height:14px;background:#f2f2f2;border:1px solid #222"></div>
<div class="abs" style="left:0;top:573px;width:6px;height:70px;background:#d9c200"></div>
<div class="abs" style="left:0;top:606px;width:3px;height:26px;background:#3db05a;border-radius:0 4px 4px 0"></div>
<div class="abs" style="left:0;top:652px;width:4px;height:3px;background:#e8f0ee"></div>
<div class="abs" style="left:2px;top:655px;width:2px;height:13px;background:#e8f0ee"></div>
<div class="abs" style="left:0;top:730px;width:6px;height:52px;background:#3f4f80"></div>
<div class="abs" style="left:2px;top:796px;width:2px;height:12px;background:#c9d4f0"></div>
<div class="abs" style="left:1px;top:816px;width:3px;height:13px;background:#f0e4d0;border-right:1px solid #8a6a40"></div>
<div class="abs" style="left:0;top:878px;width:6px;height:47px;background:#3f4f80"></div>
<div class="abs" style="left:2px;top:945px;width:2px;height:12px;background:#c9d4f0"></div>
<div class="abs" style="left:1px;top:966px;width:3px;height:13px;background:#f0e4d0;border-right:1px solid #8a6a40"></div>
<div class="abs" style="left:0;top:1018px;width:6px;height:68px;background:#1c3fc4;border-radius:0 6px 6px 0"></div>
<div class="abs" style="left:0;top:1058px;width:4px;height:8px;background:#dfe6f5"></div>
<div class="abs" style="left:0;top:1098px;width:5px;height:16px;background:#e8b070;border:1px solid #222"></div>
<div class="abs" id="dlabel" style="left:164px;top:1119px;font-size:18px;line-height:20px;color:#fff;font-weight:400;text-shadow:1px 1px 1px #000;white-space:nowrap;letter-spacing:0.900px;z-index:0">Studio 2022</div>
</body>
</html>
